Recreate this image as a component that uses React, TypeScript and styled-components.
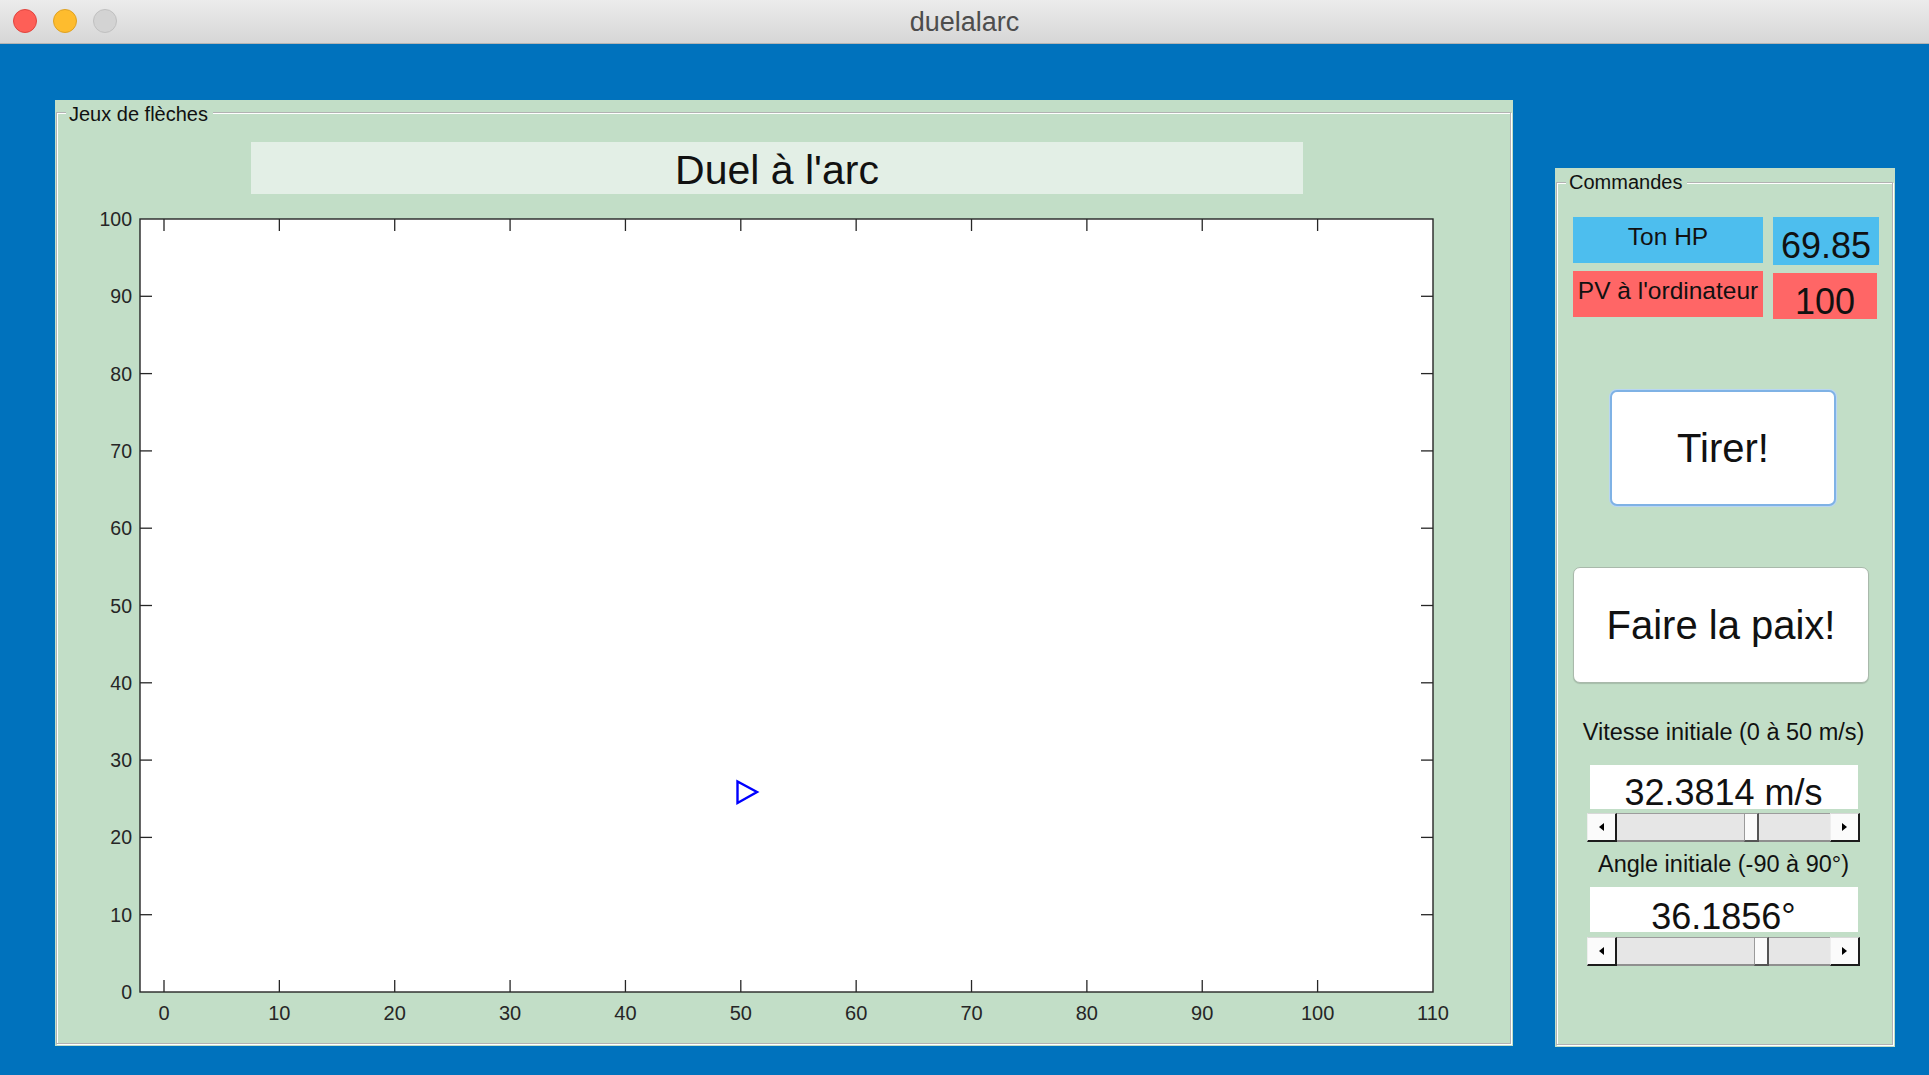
import React from "react";
import styled, { createGlobalStyle } from "styled-components";

const GREEN = "#C2DEC7";
const FONT = `"Liberation Sans", Arial, Helvetica, sans-serif`;

const Global = createGlobalStyle`
  html, body { margin: 0; padding: 0; }
  body { font-family: ${FONT}; background: #0072BD; }
  * { box-sizing: border-box; }
`;

const Window = styled.div`
  width: 1929px;
  height: 1075px;
  background: #0072bd;
  display: flex;
  flex-direction: column;
  overflow: hidden;
`;

const TitleBar = styled.div`
  height: 44px;
  flex: none;
  display: grid;
  grid-template-columns: 1fr auto 1fr;
  align-items: center;
  background: linear-gradient(#ececec, #d6d6d6);
  border-bottom: 1px solid #b4b4b4;
`;

const Lights = styled.div`
  display: flex;
  gap: 16px;
  padding-left: 13px;
  padding-bottom: 1px;
`;

const Light = styled.span<{ $fill: string; $edge: string }>`
  width: 24px;
  height: 24px;
  border-radius: 50%;
  background: ${(p) => p.$fill};
  border: 1px solid ${(p) => p.$edge};
`;

const WindowTitle = styled.div`
  font-size: 27px;
  color: #4d4d4d;
  padding-top: 2px;
`;

const Content = styled.div`
  display: flex;
  align-items: flex-start;
  gap: 42px;
  padding: 56px 0 0 55px;
`;

const Panel = styled.div<{ $w: number; $h: number; $top: number; $legendTop: number }>`
  width: ${(p) => p.$w}px;
  height: ${(p) => p.$h}px;
  margin-top: ${(p) => p.$top}px;
  padding: ${(p) => p.$legendTop}px 2px 2px 1px;
  background: ${GREEN};
  display: flex;
  flex: none;
`;

const Frame = styled.div`
  flex: 1;
  position: relative;
  border: 1px solid #b2b2b2;
  box-shadow: inset 1px 1px 0 #ffffff, 1px 1px 0 #ffffff;
  display: flex;
  flex-direction: column;
`;

const Legend = styled.div<{ $top: number }>`
  position: absolute;
  top: ${(p) => p.$top}px;
  left: 9px;
  padding: 0 5px 0 3px;
  background: ${GREEN};
  font-size: 20px;
  line-height: 24px;
  color: #111;
`;

const TitleBox = styled.div`
  flex: none;
  margin: 29px 0 0 194px;
  width: 1052px;
  height: 52px;
  background: #e3efe6;
  text-align: center;
  font-size: 41px;
  line-height: 41px;
  padding-top: 8px;
  color: #111;
`;

const ChartSvg = styled.svg`
  display: block;
  margin-top: 11px;
  flex: none;
`;

const Controls = styled.div`
  display: flex;
  flex-direction: column;
  align-items: flex-start;
  padding: 34px 0 0 16px;
`;

const StatGrid = styled.div`
  display: grid;
  grid-template-columns: 190px 106px;
  column-gap: 10px;
  row-gap: 6px;
  align-items: start;
`;

const StatLabel = styled.div<{ $bg: string }>`
  height: 46px;
  background: ${(p) => p.$bg};
  font-size: 24.5px;
  line-height: 27px;
  padding-top: 6px;
  text-align: center;
  color: #111;
  white-space: nowrap;
`;

const StatValue = styled.div<{ $bg: string; $h: number; $offset: number; $w: number }>`
  height: ${(p) => p.$h}px;
  width: ${(p) => p.$w}px;
  margin-top: ${(p) => p.$offset}px;
  background: ${(p) => p.$bg};
  font-size: 36px;
  line-height: 36px;
  padding-top: 11px;
  text-align: center;
  color: #111;
  white-space: nowrap;
`;

const PushButton = styled.button<{ $w: number; $mt: number; $ml: number; $focus?: boolean }>`
  width: ${(p) => p.$w}px;
  height: 116px;
  margin: ${(p) => p.$mt}px 0 0 ${(p) => p.$ml}px;
  background: #ffffff;
  border: ${(p) => (p.$focus ? "2px solid #7fb2e5" : "1px solid #a9b9ab")};
  border-radius: 7px;
  box-shadow: ${(p) => (p.$focus ? "0 0 0 1px #b9d6f2" : "0 1px 1px rgba(0,0,0,0.15)")};
  font-family: ${FONT};
  font-size: 40px;
  color: #111;
  padding: 0;
`;

const SliderGroup = styled.div<{ $mt: number }>`
  width: 273px;
  margin: ${(p) => p.$mt}px 0 0 14px;
  display: flex;
  flex-direction: column;
  align-items: center;
`;

const SliderLabel = styled.div<{ $mt?: number }>`
  margin-top: ${(p) => p.$mt ?? 0}px;
  font-size: 23.5px;
  line-height: 26px;
  color: #111;
  white-space: nowrap;
`;

const ValueBox = styled.div<{ $mt: number; $h: number; $pt: number }>`
  width: 268px;
  height: ${(p) => p.$h}px;
  margin-top: ${(p) => p.$mt}px;
  background: #ffffff;
  text-align: center;
  font-size: 36px;
  line-height: 34px;
  padding-top: ${(p) => p.$pt}px;
  color: #111;
  white-space: nowrap;
`;

const SliderBar = styled.div<{ $mt: number }>`
  width: 273px;
  height: 29px;
  margin-top: ${(p) => p.$mt}px;
  display: flex;
  flex: none;
`;

const ArrowButton = styled.div<{ $dir: "left" | "right" }>`
  width: 30px;
  height: 29px;
  flex: none;
  background: #fbfbfb;
  border-right: 2px solid #1c1c1c;
  border-bottom: 2px solid #1c1c1c;
  border-top: 1px solid #d8d8d8;
  border-left: 1px solid #eeeeee;
  display: flex;
  align-items: center;
  justify-content: center;
  &::after {
    content: "";
    width: 0;
    height: 0;
    border-top: 4px solid transparent;
    border-bottom: 4px solid transparent;
    ${(p) => (p.$dir === "left" ? "border-right: 5px solid #000;" : "border-left: 5px solid #000;")}
  }
`;

const Trough = styled.div`
  flex: 1;
  position: relative;
  background: #e6e6e6;
  border-top: 1px solid #9c9c9c;
  border-bottom: 2px solid #8f8f8f;
`;

const Thumb = styled.div`
  position: absolute;
  top: -1px;
  bottom: -2px;
  width: 15px;
  background: #fbfbfb;
  border: 1px solid #9a9a9a;
  border-right: 2px solid #555;
  border-bottom: 2px solid #555;
`;

const Slider: React.FC<{ frac: number; mt: number }> = ({ frac, mt }) => (
  <SliderBar $mt={mt}>
    <ArrowButton $dir="left" />
    <Trough>
      <Thumb style={{ left: `${Math.round(frac * (211 - 15))}px` }} />
    </Trough>
    <ArrowButton $dir="right" />
  </SliderBar>
);

const X0 = 164;
const XS = 11.536;
const Y0 = 992;
const YS = 7.73;
const AX_L = 140;
const AX_R = 1433;
const AX_T = 219;
const AX_B = 992;

const Chart: React.FC = () => {
  const xs = Array.from({ length: 12 }, (_, i) => i * 10);
  const ys = Array.from({ length: 11 }, (_, i) => i * 10);
  const ink = "#262626";
  return (
    <ChartSvg width={1400} height={826} viewBox="57 205 1400 826">
      <rect x={AX_L} y={AX_T} width={AX_R - AX_L} height={AX_B - AX_T} fill="#fff" stroke={ink} strokeWidth={1.4} />
      {xs.map((v) => {
        const x = X0 + v * XS;
        return (
          <g key={`x${v}`}>
            {v < 110 && <line x1={x} x2={x} y1={AX_B} y2={AX_B - 12} stroke={ink} strokeWidth={1.3} />}
            {v < 110 && <line x1={x} x2={x} y1={AX_T} y2={AX_T + 12} stroke={ink} strokeWidth={1.3} />}
            <text x={x} y={1020} textAnchor="middle" fontSize={20} fill={ink} fontFamily={FONT}>
              {v}
            </text>
          </g>
        );
      })}
      {ys.map((v) => {
        const y = Y0 - v * YS;
        return (
          <g key={`y${v}`}>
            {v > 0 && v < 100 && <line x1={AX_L} x2={AX_L + 12} y1={y} y2={y} stroke={ink} strokeWidth={1.3} />}
            {v > 0 && v < 100 && <line x1={AX_R} x2={AX_R - 12} y1={y} y2={y} stroke={ink} strokeWidth={1.3} />}
            <text x={132} y={y + 7} textAnchor="end" fontSize={19.5} fill={ink} fontFamily={FONT}>
              {v}
            </text>
          </g>
        );
      })}
      <polygon points="737.5,781.5 737.5,803 757,792" fill="none" stroke="#0000ff" strokeWidth={2.4} strokeLinejoin="miter" />
    </ChartSvg>
  );
};

export default function App() {
  return (
    <>
      <Global />
      <Window>
        <TitleBar>
          <Lights>
            <Light $fill="#fe5f57" $edge="#e0443e" />
            <Light $fill="#febc2e" $edge="#dea123" />
            <Light $fill="#d3d3d3" $edge="#c0c0c0" />
          </Lights>
          <WindowTitle>duelalarc</WindowTitle>
          <div />
        </TitleBar>
        <Content>
          <Panel $w={1458} $h={946} $top={0} $legendTop={12}>
            <Frame>
              <Legend $top={-11}>Jeux de flèches</Legend>
              <TitleBox>Duel à l'arc</TitleBox>
              <Chart />
            </Frame>
          </Panel>
          <Panel $w={340} $h={879} $top={68} $legendTop={14}>
            <Frame>
              <Legend $top={-13}>Commandes</Legend>
              <Controls>
                <StatGrid>
                  <StatLabel $bg="#4dbeee">Ton HP</StatLabel>
                  <StatValue $bg="#4dbeee" $h={48} $offset={0} $w={106}>69.85</StatValue>
                  <StatLabel $bg="#ff6666">PV à l'ordinateur</StatLabel>
                  <StatValue $bg="#ff6666" $h={46} $offset={2} $w={104}>100</StatValue>
                </StatGrid>
                <PushButton $w={226} $mt={71} $ml={37} $focus>Tirer!</PushButton>
                <PushButton $w={296} $mt={61} $ml={0}>Faire la paix!</PushButton>
                <SliderGroup $mt={36}>
                  <SliderLabel>Vitesse initiale (0 à 50 m/s)</SliderLabel>
                  <ValueBox $mt={20} $h={44} $pt={11}>32.3814 m/s</ValueBox>
                  <Slider frac={32.3814 / 50} mt={4} />
                  <SliderLabel $mt={9}>Angle initiale (-90 à 90°)</SliderLabel>
                  <ValueBox $mt={10} $h={45} $pt={13}>36.1856°</ValueBox>
                  <Slider frac={(36.1856 + 90) / 180} mt={5} />
                </SliderGroup>
              </Controls>
            </Frame>
          </Panel>
        </Content>
      </Window>
    </>
  );
}
